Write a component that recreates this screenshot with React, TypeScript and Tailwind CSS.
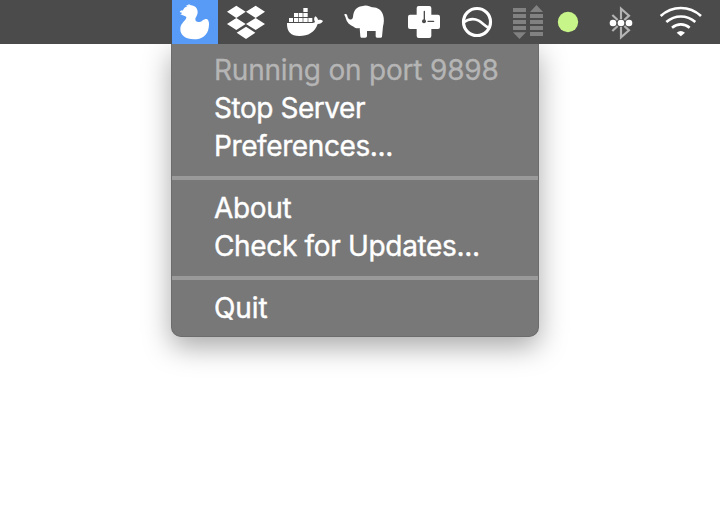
import type { ReactNode } from "react";

function Slot({ box, className, children }: { box: string; className: string; children: ReactNode }) {
  return (
    <svg viewBox={box} className={`h-11 shrink-0 ${className}`} fill="#fff">
      {children}
    </svg>
  );
}

function MenuBar() {
  return (
    <header className="flex h-11 w-full bg-[#4b4b4b] pl-[172px]">
      {/* Duck */}
      <Slot box="21 0 138 132" className="w-[46px] bg-[#589bf7]">
        <path d="M54 31C56 25 60 21 67 19L63 15L71 16L70 12L78 16C90 17 98 25 98 36C98 47 91 51 91 58C91 64 96 67 103 66C112 65 114 57 125 57C133 60 133 74 131 83C128 106 110 118 87 118C62 118 46 106 46 88C46 72 56 67 62 58C66 52 64 50 59 48L46 43L52 39L44 36C47 31 50 32 54 31Z" />
      </Slot>
      {/* Dropbox */}
      <Slot box="159 0 171 132" className="w-[57px]">
        <path d="M214 17L242 35L214 54L186 35ZM272 17L300 35L272 54L243 35ZM214 54L242 72L214 90L186 72ZM272 54L300 72L272 90L243 72ZM243 80L271 98L243 117L215 98Z" />
      </Slot>
      {/* Docker whale */}
      <Slot box="0 0 180 132" className="w-[60px]">
        <path d="M85 24h13v12H85zM57 39h12v12H57zM71 39h12v12H71zM85 39h13v12H85zM42 54h12v12H42zM57 54h12v12H57zM71 54h12v12H71zM85 54h13v12H85zM100 54h12v12h-12z" />
        <path d="M36 69H109C114 69 118 68 120 66C116 59 117 53 121 49C126 52 129 56 129 60C134 58 140 59 144 63C141 69 136 72 128 72C119 97 100 108 73 108C48 108 35 95 36 69Z" />
      </Slot>
      {/* Elephant */}
      <Slot box="180 0 180 132" className="w-[60px]">
        <path d="M208 43C213 40 217 43 217 48C219 57 224 61 231 57C236 53 233 41 239 32C245 21 256 18 268 17C280 16 285 21 291 22C307 21 319 30 324 44C328 56 327 69 324 79L321 110Q320 113 317 113H306Q302 113 302 109V93H276V109Q275 113 271 113H259Q256 113 256 109L254 84C247 86 241 84 236 80C224 76 215 67 212 54C212 50 208 48 208 43Z" />
      </Slot>
      {/* Medical cross with clock hands */}
      <Slot box="0 0 165 132" className="w-[55px]">
        <rect x="65" y="18" width="44" height="96" rx="6" />
        <rect x="39" y="44" width="96" height="43" rx="6" />
        <path d="M88 34V64M99 64H116" stroke="#4b4b4b" strokeWidth="4" strokeLinecap="round" />
        <circle cx="87" cy="64" r="6" fill="#4b4b4b" />
      </Slot>
      {/* Circle with wave */}
      <Slot box="165 0 150 132" className="w-[50px]">
        <circle cx="246" cy="66" r="40.500" fill="none" stroke="#fff" strokeWidth="9.500" />
        <path d="M204 68C221 56 236 54 251 62C262 68 270 79 282 84" fill="none" stroke="#fff" strokeWidth="8" />
      </Slot>
      {/* Transfer indicators */}
      <Slot box="0 0 150 132" className="w-[50px]">
        <path fill="#818181" d="M39 24h39v12H39zM39 42h39v12H39zM39 60h39v12H39zM39 78h39v12H39zM39 97h39L58.500 117zM90 36h39L109.500 15zM90 42h39v12H90zM90 60h39v12H90zM90 78h39v12H90zM90 96h39v12H90z" />
      </Slot>
      {/* Status light */}
      <Slot box="150 0 150 132" className="w-[50px]">
        <circle cx="204" cy="66" r="30.5" fill="#c8f589" />
      </Slot>
      {/* Bluetooth, connected */}
      <Slot box="0 0 150 132" className="w-[50px]">
        <path d="M37 45L53 60M73 60L87 47L63 26V57M63 81V112L87 91L73 78M53 78L37 93" fill="none" stroke="#b4b4b4" strokeWidth="6.500" />
        <circle cx="39" cy="69" r="10" />
        <circle cx="63" cy="69" r="10" />
        <circle cx="87" cy="69" r="10" />
      </Slot>
      {/* Wi-Fi */}
      <Slot box="150 0 210 132" className="w-[70px]">
        <path d="M182 48C217 16 268 16 303 48M199 66C225 44 260 44 286 66M216 83C232 70 253 70 269 83" fill="none" stroke="#fff" strokeWidth="8" />
        <path d="M230 98Q242 88 255 98L242.500 109Z" />
      </Slot>
    </header>
  );
}

function Item({ label, className }: { label: string; className: string }) {
  return (
    <div className={`flex h-[38px] items-center whitespace-nowrap pl-[42px] text-[28px] leading-[38px] ${className}`}>
      {label}
    </div>
  );
}

export default function App() {
  return (
    <div className="h-[510px] w-[720px] overflow-hidden bg-white font-['Inter',sans-serif]">
      <div className="relative z-10">
        <MenuBar />
      </div>
      <nav className="ml-[171px] h-[293px] w-[368px] rounded-b-[10px] border border-t-0 border-[#6c6c6c] bg-[#787878] pt-[7px] text-white shadow-[0_10px_28px_rgba(0,0,0,0.34)]">
        <Item label="Running on port 9898" className="tracking-[-0.2px] text-[#b5b5b5] [-webkit-text-stroke:0.3px_#b5b5b5]" />
        <Item label="Stop Server" className="tracking-[-0.45px] [-webkit-text-stroke:0.4px_white]" />
        <Item label="Preferences..." className="tracking-[-0.4px] [-webkit-text-stroke:0.4px_white]" />
        <div className="mt-[11px] mb-[9px] h-1 bg-[#9a9a9a]" />
        <Item label="About" className="tracking-[-0.3px] [-webkit-text-stroke:0.4px_white]" />
        <Item label="Check for Updates..." className="tracking-[-0.33px] [-webkit-text-stroke:0.4px_white]" />
        <div className="mt-[11px] mb-[9px] h-1 bg-[#9a9a9a]" />
        <Item label="Quit" className="tracking-[-0.1px] [-webkit-text-stroke:0.4px_white]" />
      </nav>
    </div>
  );
}
